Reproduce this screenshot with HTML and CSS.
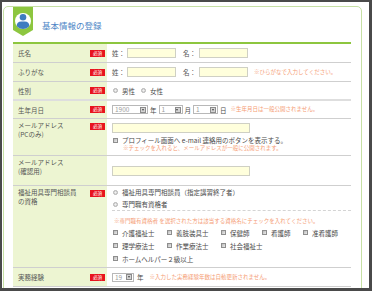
FILE: index.html
```html
<!DOCTYPE html>
<html lang="ja">
<head>
<meta charset="utf-8">
<link rel="stylesheet" href="styles.css">
</head>
<body>
<div class="frame">
  <div class="card">
    <div class="head">
      <svg class="ribbon" width="20" height="29" viewBox="0 0 20 29">
        <defs><clipPath id="cc"><circle cx="10" cy="14" r="8"/></clipPath></defs>
        <polygon points="0,0 20,0 20,23 10,29 0,23" fill="#8dc63f"/>
        <circle cx="10" cy="14" r="8" fill="#fff"/>
        <g clip-path="url(#cc)" fill="#3e7cc0">
          <circle cx="10" cy="10.2" r="3.3"/>
          <path d="M3.6 24 V19.6 Q3.6 14.6 8.4 14.6 H11.6 Q16.4 14.6 16.4 19.6 V24 Z"/>
        </g>
      </svg>
      <h1 class="title">基本情報の登録</h1>
    </div>
    <div class="form">
      <div class="row r18">
        <div class="label"><span>氏名</span><span class="req">必須</span></div>
        <div class="value line">
          <span>姓：</span><span class="inp short"></span>
          <span class="gap7">名：</span><span class="inp short m3"></span>
        </div>
      </div>
      <div class="row r18">
        <div class="label"><span>ふりがな</span><span class="req">必須</span></div>
        <div class="value line">
          <span>姓：</span><span class="inp short"></span>
          <span class="gap7">名：</span><span class="inp short m3"></span>
          <span class="note n6">※ひらがなで入力してください。</span>
        </div>
      </div>
      <div class="row r17 thick">
        <div class="label"><span>性別</span><span class="req">必須</span></div>
        <div class="value line">
          <span class="radio"></span><span class="opt">男性</span>
          <span class="radio m6"></span><span class="opt">女性</span>
        </div>
      </div>
      <div class="row r17">
        <div class="label"><span>生年月日</span><span class="req">必須</span></div>
        <div class="value line">
          <span class="sel w36"><span class="sv">1900</span><span class="arr"></span></span><span class="unit">年</span>
          <span class="sel w24 m2"><span class="sv">1</span><span class="arr"></span></span><span class="unit">月</span>
          <span class="sel w25 m2"><span class="sv">1</span><span class="arr"></span></span><span class="unit">日</span>
          <span class="note n4">※生年月日は一般公開されません。</span>
        </div>
      </div>
      <div class="row r36">
        <div class="label top"><span class="ltxt">メールアドレス<br>(PCのみ)</span><span class="req">必須</span></div>
        <div class="value">
          <span class="inp long"></span>
          <div class="chkline"><span class="check"></span><span class="opt">プロフィール画面へ e-mail 連絡用のボタンを表示する。</span></div>
          <div class="note indent">※チェックを入れると、メールアドレスが一般に公開されます。</div>
        </div>
      </div>
      <div class="row r29">
        <div class="label top"><span class="ltxt">メールアドレス<br>(確認用)</span></div>
        <div class="value">
          <span class="inp long"></span>
        </div>
      </div>
      <div class="row r81">
        <div class="label top"><span class="ltxt">福祉用具専門相談員<br>の資格</span><span class="req">必須</span></div>
        <div class="value stack">
          <div class="optline"><span class="radio"></span><span class="opt">福祉用具専門相談員（指定講習終了者）</span></div>
          <div class="optline dashed"><span class="radio"></span><span class="opt">専門職有資格者</span></div>
          <div class="note qnote">※専門職有資格者 を選択された方は該当する資格名にチェックを入れてください。</div>
          <div class="chkrow">
            <span class="item"><span class="check"></span><span class="opt">介護福祉士</span></span>
            <span class="item"><span class="check"></span><span class="opt">義肢装具士</span></span>
            <span class="item"><span class="check"></span><span class="opt">保健師</span></span>
            <span class="item"><span class="check"></span><span class="opt">看護師</span></span>
            <span class="item"><span class="check"></span><span class="opt">准看護師</span></span>
          </div>
          <div class="chkrow">
            <span class="item"><span class="check"></span><span class="opt">理学療法士</span></span>
            <span class="item"><span class="check"></span><span class="opt">作業療法士</span></span>
            <span class="item"><span class="check"></span><span class="opt">社会福祉士</span></span>
          </div>
          <div class="chkrow">
            <span class="item"><span class="check"></span><span class="opt">ホームヘルパー２級以上</span></span>
          </div>
        </div>
      </div>
      <div class="row r18">
        <div class="label"><span>実務経験</span><span class="req">必須</span></div>
        <div class="value line">
          <span class="sel w22"><span class="sv">19</span><span class="arr"></span></span><span class="unit u3">年</span>
          <span class="note n6">※入力した実務経験年数は自動更新されません。</span>
        </div>
      </div>
    </div>
  </div>
</div>
</body>
</html>
```

FILE: styles.css
```css
html, body {
  margin: 0;
  padding: 0;
  background: #fff;
}
body {
  font-family: "Noto Sans CJK JP", "Noto Sans", sans-serif;
  color: #555;
}
.frame {
  width: 372px;
  height: 291px;
  box-sizing: border-box;
  border: 2px solid #4a4a4a;
  border-right-width: 3px;
  border-bottom-width: 3px;
  background: #fff;
  overflow: hidden;
}
.card {
  margin: 4px 0 0 1px;
  width: 359px;
  height: 320px;
  box-sizing: border-box;
  border: 1px solid #c6e0a4;
  border-radius: 5px 5px 0 0;
  padding: 0 10px 0 9px;
  background: #fff;
}
.head {
  display: flex;
  align-items: flex-start;
  height: 35px;
  border-bottom: 2px solid #8dc63f;
}
.ribbon {
  display: block;
  flex: none;
}
.title {
  margin: 13px 0 0 9px;
  font-size: 8.5px;
  line-height: 10px;
  font-weight: normal;
  color: #4e86c6;
}
.row {
  display: flex;
  border-bottom: 1px solid #cfcfcf;
  font-size: 6.5px;
  line-height: 8px;
}
.row.thick {
  border-bottom: 2px solid #dedede;
}
.r17 { height: 17px; }
.r18 { height: 18px; }
.r29 { height: 29px; }
.r36 { height: 36px; }
.r81 { height: 81px; }
.label {
  width: 94px;
  flex: none;
  box-sizing: border-box;
  background: #edf5d2;
  display: flex;
  justify-content: space-between;
  align-items: center;
  padding: 0 2px 0 5px;
  color: #555;
}
.label.top {
  align-items: flex-start;
  padding-top: 1.5px;
}
.ltxt {
  line-height: 9.5px;
}
.req {
  width: 15px;
  height: 7px;
  background: #e8141e;
  color: #fff;
  font-size: 4.6px;
  line-height: 7px;
  text-align: center;
  flex: none;
}
.label.top .req {
  margin-top: 2px;
}
.value {
  flex: 1;
  display: flex;
  flex-direction: column;
  justify-content: center;
  align-items: flex-start;
  padding-left: 5px;
  min-width: 0;
}
.value.line {
  flex-direction: row;
  align-items: center;
  justify-content: flex-start;
  white-space: nowrap;
}
.inp {
  display: block;
  height: 10px;
  box-sizing: border-box;
  background: #ffffdc;
  border: 1px solid #cfd0c4;
}
.inp.short {
  width: 49px;
  margin-left: 2px;
}
.inp.m3 { margin-left: 3px; }
.inp.long { width: 138px; }
.gap7 { margin-left: 7px; }
.note {
  color: #f59c74;
  font-size: 5.5px;
  line-height: 7px;
  white-space: nowrap;
}
.n6 { margin-left: 6px; }
.n4 { margin-left: 4px; }
.radio {
  display: inline-block;
  width: 5px;
  height: 5px;
  box-sizing: border-box;
  border-radius: 50%;
  border: 1px solid #b0b0b0;
  background: radial-gradient(circle at 50% 50%, #f2f2f2 0, #d0d0d0 100%);
  margin-left: 1px;
  flex: none;
}
.radio.m6 { margin-left: 6px; }
.check {
  display: inline-block;
  width: 5px;
  height: 5px;
  box-sizing: border-box;
  border: 1px solid #8e8e8e;
  background: linear-gradient(135deg, #b9b9b9, #ececec);
  margin-left: 1px;
  flex: none;
}
.opt {
  margin-left: 4px;
  color: #4a4a4a;
  white-space: nowrap;
}
.sel {
  display: flex;
  align-items: center;
  justify-content: space-between;
  height: 9px;
  box-sizing: border-box;
  border: 1px solid #b8b8b8;
  background: #fff;
  padding: 0 1px 0 2px;
  flex: none;
}
.w22 { width: 22px; }
.w24 { width: 24px; }
.w25 { width: 25px; }
.w36 { width: 36px; }
.sel.m2 { margin-left: 2px; }
.sv {
  color: #a0a0a0;
  font-size: 6.5px;
  line-height: 7px;
}
.arr {
  position: relative;
  width: 6px;
  height: 6px;
  box-sizing: border-box;
  border: 1px solid #8c8c8c;
  background: #d4d4d4;
}
.arr::after {
  content: "";
  position: absolute;
  left: 0.5px;
  top: 1.2px;
  border-left: 1.5px solid transparent;
  border-right: 1.5px solid transparent;
  border-top: 2px solid #444;
}
.unit {
  margin-left: 2px;
  color: #4a4a4a;
}
.unit.u3 { margin-left: 3px; }
.chkline {
  display: flex;
  align-items: center;
  margin-top: 3px;
  height: 9px;
}
.note.indent {
  margin-left: 11px;
}
.value.stack {
  justify-content: flex-start;
  align-items: stretch;
  padding-top: 0;
}
.optline {
  display: flex;
  align-items: center;
  height: 12px;
}
.optline.dashed {
  height: 12px;
  border-bottom: 1px dashed #d4d4d4;
}
.qnote {
  margin-top: 5px;
  height: 10px;
  line-height: 10px;
  margin-left: 2px;
}
.chkrow {
  display: flex;
  align-items: center;
  height: 13px;
}
.item {
  display: flex;
  align-items: center;
  margin-right: 11.5px;
}
```
